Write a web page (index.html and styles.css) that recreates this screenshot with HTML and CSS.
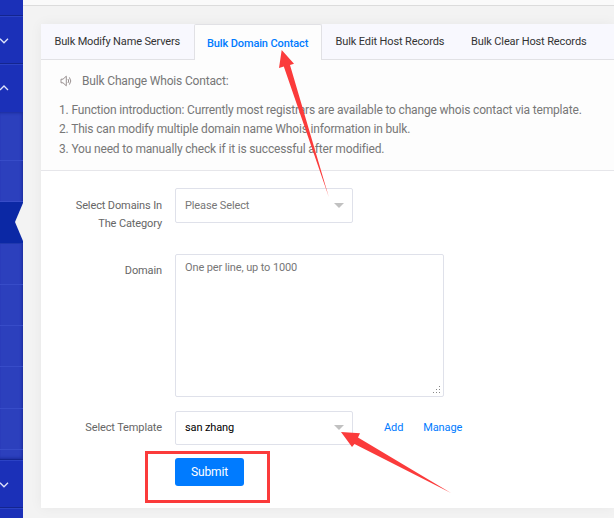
FILE: index.html
```html
<!DOCTYPE html>
<html lang="en">
<head>
<meta charset="utf-8">
<title>Bulk Domain Contact</title>
<link rel="stylesheet" href="styles.css">
</head>
<body>
<div class="app">
  <nav class="sidebar">
    <div class="item first"></div>
    <div class="item"><svg class="chev" viewBox="0 0 10 6"><path d="M1 .8 5 4.8 9 .8"/></svg></div>
    <div class="item open"><svg class="chev" viewBox="0 0 10 6"><path d="M1 5 5 1 9 5"/></svg></div>
    <div class="submenu">
      <div class="sub head"></div>
      <div class="sub"></div>
      <div class="sub active"><svg class="notch" viewBox="0 0 8 38"><path d="M8 0 0 19 8 38z"/></svg></div>
      <div class="sub"></div>
      <div class="sub"></div>
      <div class="sub"></div>
      <div class="sub"></div>
      <div class="sub"></div>
    </div>
    <div class="item"><svg class="chev" viewBox="0 0 10 6"><path d="M1 .8 5 4.8 9 .8"/></svg></div>
    <div class="item last"></div>
  </nav>
  <main class="main">
    <div class="topbar"></div>
    <section class="card">
      <div class="tabs">
        <a class="tab">Bulk Modify Name Servers</a>
        <a class="tab selected">Bulk Domain Contact</a>
        <a class="tab">Bulk Edit Host Records</a>
        <a class="tab clear">Bulk Clear Host Records</a>
      </div>
      <div class="info">
        <div class="title">
          <svg class="speaker" viewBox="0 0 12 12"><path d="M1 4.2h2L6.300 1.200v9.600L3 7.800H1z"/><path d="M8 4q1.400 2 0 4M9.400 2.400q2.800 3.600 0 7.200"/></svg>
          <span>Bulk Change Whois Contact:</span>
        </div>
        <div class="line first-line">1. Function introduction: Currently most registrars are available to change whois contact via template.</div>
        <div class="line">2. This can modify multiple domain name Whois information in bulk.</div>
        <div class="line">3. You need to manually check if it is successful after modified.</div>
      </div>
      <form class="form">
        <div class="row category">
          <label>Select Domains In<br>The Category</label>
          <div class="select"><span>Please Select</span><i class="caret"></i></div>
        </div>
        <div class="row domain">
          <label>Domain</label>
          <div class="area"><span>One per line, up to 1000</span>
            <svg class="grip" viewBox="0 0 8 8"><path d="M6 0h1v1H6zM3 3h1v1H3zM6 3h1v1H6zM0 6h1v1H0zM3 6h1v1H3zM6 6h1v1H6z"/></svg>
          </div>
        </div>
        <div class="row template">
          <label>Select Template</label>
          <div class="select chosen"><span>san zhang</span><i class="caret"></i></div>
          <a class="link add">Add</a>
          <a class="link">Manage</a>
        </div>
        <div class="submit">Submit</div>
      </form>
    </section>
  </main>
  <svg class="marks" viewBox="0 0 614 518">
    <path d="M281.7 50 294 63.7 290 65 328.8 197 283.8 66.5 279 68z"/>
    <path d="M341 432 360 433.3 358 437.5 451 493 354.5 444 352 447z"/>
    <rect x="146.500" y="452.500" width="122" height="49"/>
  </svg>
</div>
</body>
</html>
```
FILE: styles.css
```css
* { box-sizing: border-box; }
body { margin: 0; font-family: Roboto, sans-serif; font-size: 11px; letter-spacing: -.12px; color: #666; background: #f3f3f3; }
.app { position: relative; display: flex; width: 614px; height: 518px; overflow: hidden; }

.sidebar { width: 23px; flex: none; background: #1b30b8; }
.item { height: 48px; border-top: 1px solid #2b42c4; border-bottom: 1px solid #14258f; display: flex; align-items: center; }
.item.first { height: 16px; border-top: 0; }
.item.open { border-bottom: 0; }
.item.open .chev { margin-top: -1px; }
.item.last { height: 11px; border-bottom: 0; }
.chev { width: 10px; height: 6px; fill: none; stroke: #dfe4fa; stroke-width: 1.3; margin: 1px 0 0 -1px; }
.submenu { height: 348px; background: #2c40bd; border-bottom: 1px solid #14258f; box-shadow: inset -3px 0 3px -2px #1c2d9c, inset 0 3px 3px -2px #1c2d9c, inset 0 -3px 3px -2px #1c2d9c; }
.sub { height: 41.3px; border-bottom: 1px solid #374cc8; }
.sub.head { height: 49px; }
.sub.active { background: #0b28a5; display: flex; justify-content: flex-end; border-color: #2038ad; }
.notch { width: 8px; height: 38px; fill: #f3f3f3; margin-top: 1px; }

.main { flex: 1; min-width: 0; }
.topbar { height: 6px; background: #fafafa; border-bottom: 1px solid #dcdcdc; }
.card { height: 484px; margin: 18px 0 0 18px; background: #fff; box-shadow: 0 0 12px rgba(0,0,0,.05); }
.tabs { display: flex; height: 36px; background: #f8f8fe; border-bottom: 1px solid #e1e1e5; }
.tab { padding: 0 13.5px; display: flex; align-items: center; color: #333; white-space: nowrap; }
.tab.selected { width: 128px; height: 36px; padding: 1px 12px 0; border: 1px solid #e1e1e5; border-bottom: 0; border-radius: 2px 2px 0 0; background: #fdfdfd; color: #007bff; font-weight: 500; }
.tab:first-child { width: 153px; letter-spacing: -.15px; }
.tab.clear { padding-left: 14px; }
.tab:nth-child(3) { width: 135px; }

.info { height: 111px; padding: 10px 0 0 18px; background: #fdfdfd; border-bottom: 1px solid #e6e6ea; font-size: 12px; letter-spacing: -.165px; color: #777; white-space: nowrap; }
.title { display: flex; align-items: center; height: 22px; margin-bottom: 7px; gap: 10px; }
.speaker { width: 12px; height: 12px; fill: none; stroke: #8d8585; stroke-width: .9; margin-left: 1px; }
.line { height: 20px; line-height: 20px; }
.line.first-line { line-height: 22px; }
.line:last-child { margin-top: -1px; line-height: 22px; }

.form { height: 337px; padding-top: 17px; }
.row { display: flex; }
.row label { width: 121px; margin-right: 13px; text-align: right; line-height: 18px; }
.row.category { height: 35px; }
.row.category label { padding-top: 9px; }
.row.domain { margin-top: 31px; }
.row.domain label { padding-top: 8px; }
.row.template { margin-top: 14px; }
.row.template label { padding-top: 8px; }
.select { width: 178px; height: 35px; border: 1px solid #dfe1ea; border-radius: 2px; display: flex; align-items: center; justify-content: space-between; padding: 0 8px 0 9px; color: #777; background: #fff; }
.select.chosen { height: 34px; padding-bottom: 2px; color: #000; }
.caret { border: 5px solid transparent; border-top-color: #c1c1c1; border-bottom: 0; }
.area { width: 269px; height: 143px; border: 1px solid #dfe1ea; border-radius: 2px; padding: 6px 9px; color: #777; display: flex; justify-content: space-between; }
.grip { width: 8px; height: 8px; align-self: flex-end; margin: 0 -7px -4px 0; fill: #888; }
.link { color: #007bff; line-height: 33px; margin-left: 20px; }
.link.add { margin-left: 31px; }
.submit { width: 69px; height: 28px; margin: 13px 0 0 134px; background: #007bff; border-radius: 3px; color: #fff; font-size: 12px; line-height: 28px; text-align: center; }

.marks { position: absolute; left: 0; top: 0; width: 614px; height: 518px; pointer-events: none; }
.marks path { fill: #fb3b3b; }
.marks rect { fill: none; stroke: #fb3b3b; stroke-width: 3; }
```
